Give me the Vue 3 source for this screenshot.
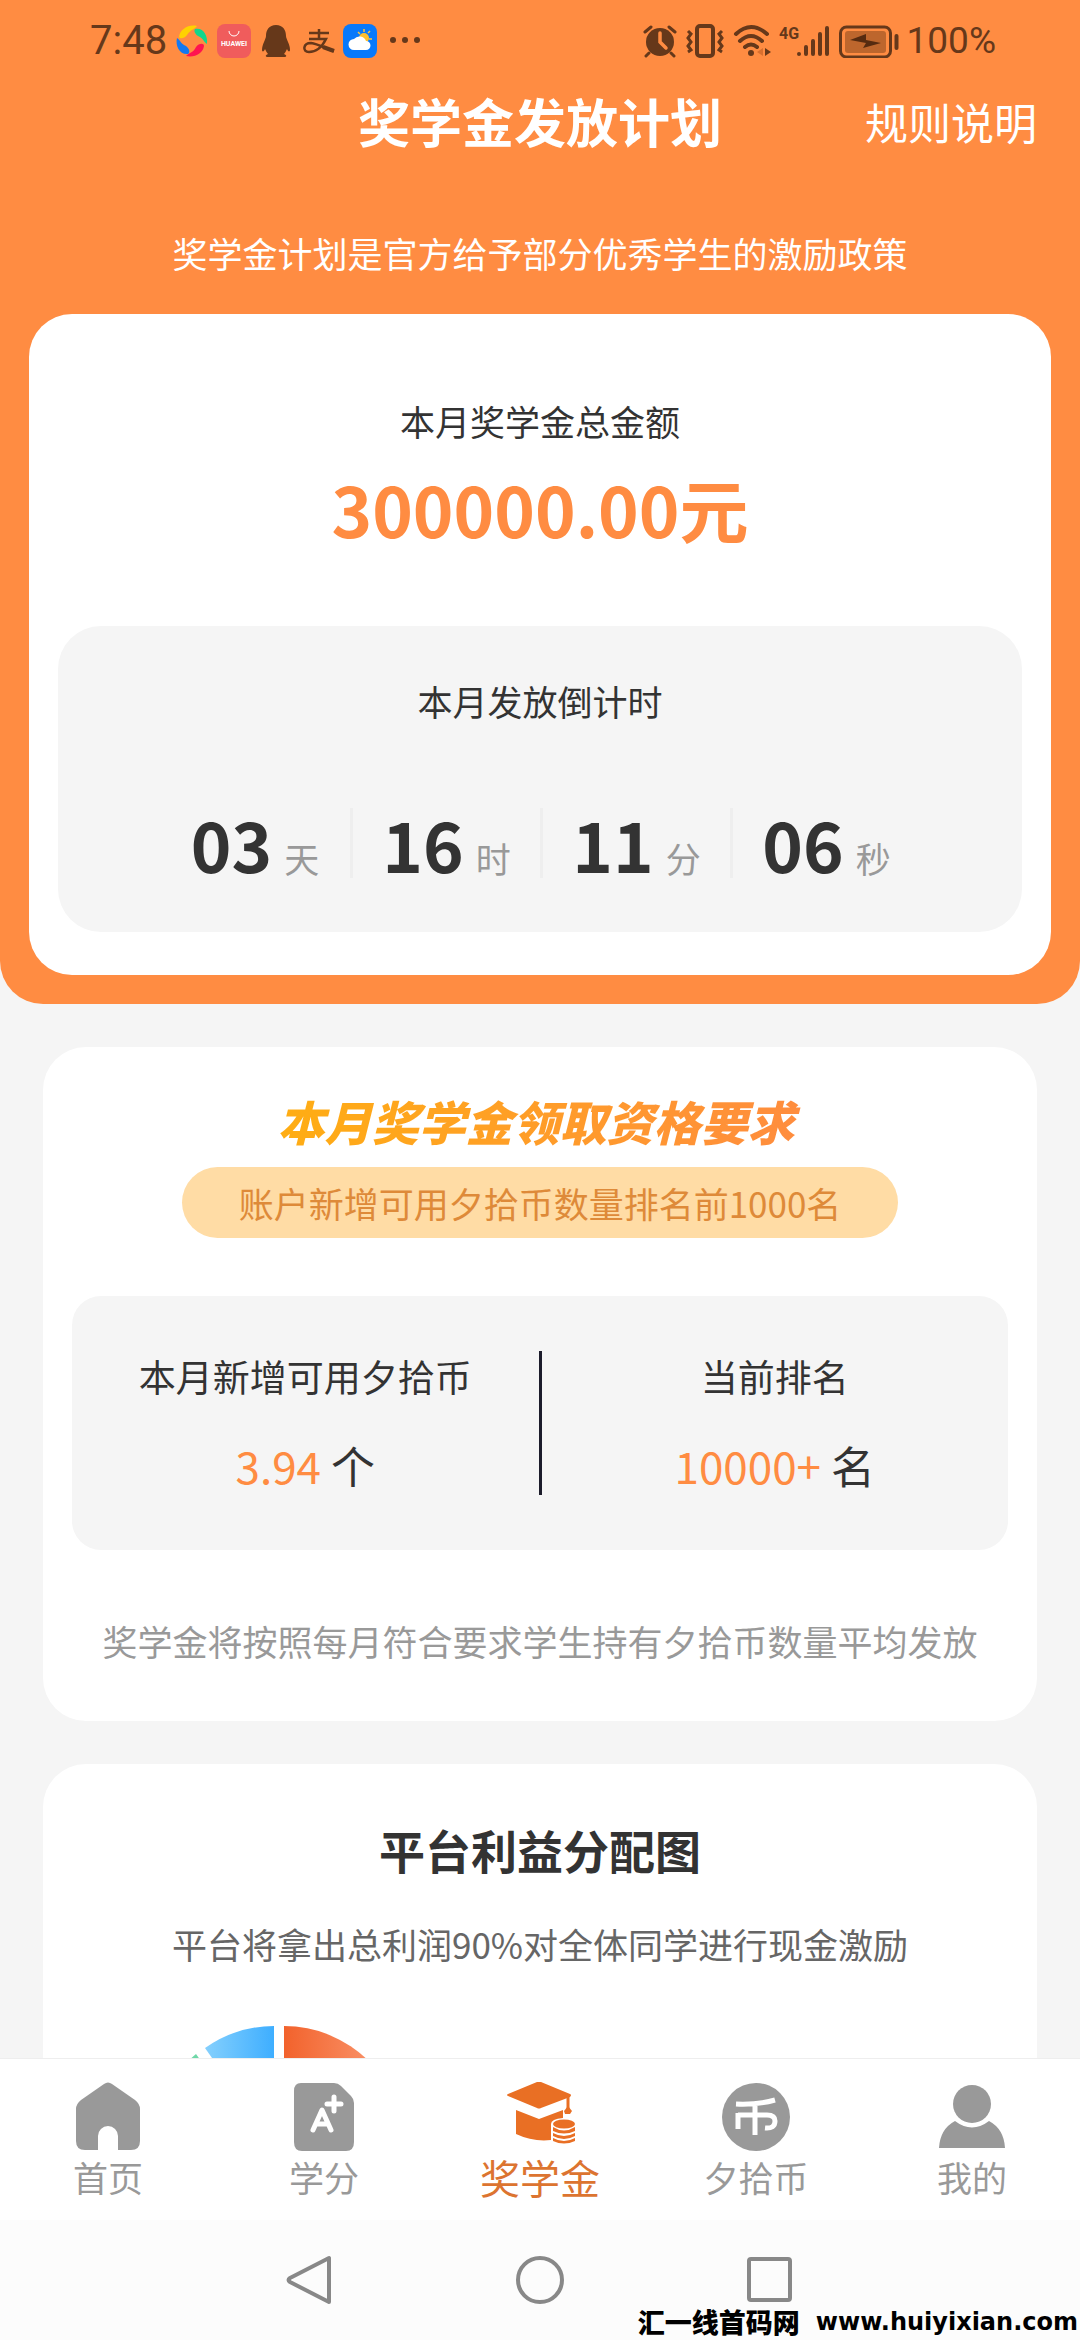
<script setup>
import { ref } from 'vue'

const countdown = [
  { value: '03', unit: '天' },
  { value: '16', unit: '时' },
  { value: '11', unit: '分' },
  { value: '06', unit: '秒' },
]

const stats = [
  { label: '本月新增可用夕拾币', value: '3.94', unit: '个' },
  { label: '当前排名', value: '10000+', unit: '名' },
]

const tabs = [
  { id: 'home', label: '首页' },
  { id: 'credit', label: '学分' },
  { id: 'scholarship', label: '奖学金' },
  { id: 'coin', label: '夕拾币' },
  { id: 'me', label: '我的' },
]
const active = ref('scholarship')
</script>

<template>
  <div class="app">
    <div class="status">
      <div class="status-left">
        <span class="clock">7:48</span>
        <svg width="34" height="34" viewBox="0 0 34 34">
          <path d="M4 13C5 5 14 0 22 2C19 6 16 5 12 11C9 15 5 15 4 13Z" fill="#ffd200" />
          <path d="M20 5C28 3 33 11 32 20C28 17 29 15 23 12C19 9 19 6 20 5Z" fill="#12d68b" />
          <path d="M29 22C28 29 20 34 11 32C15 28 18 29 21 23C24 19 29 19 29 22Z" fill="#ff1450" />
          <path d="M13 30C5 31 0 22 2 14C6 17 5 19 11 22C15 25 15 29 13 30Z" fill="#1478f0" />
        </svg>
        <svg width="34" height="34" viewBox="0 0 34 34">
          <rect width="34" height="34" rx="8" fill="#f05c5c" />
          <path d="M12 7a5 5 0 0 0 10 0" fill="none" stroke="#fff" stroke-width="1" />
          <text x="17" y="22" text-anchor="middle" class="brand">HUAWEI</text>
        </svg>
        <svg width="34" height="34" viewBox="0 0 34 34">
          <path d="M17 1C10 1 7 6 7 12C7 15 3 20 3 26C3 28 5 28 6 25C7 27 8 29 9 30C6 31 6 33 9 33H25C28 33 28 31 25 30C26 29 27 27 28 25C29 28 31 28 31 26C31 20 27 15 27 12C27 6 24 1 17 1Z" fill="#66381a" />
        </svg>
        <svg width="34" height="34" viewBox="0 0 34 34" fill="none" stroke="#66381a" stroke-width="2.5">
          <path d="M8 9H28M18 5V15M8 15H25C21 23 15 28 8 28C1 28 2 19 10 19C18 20 25 25 33 27" />
          <path d="M22 23L33 27" stroke-width="4" />
        </svg>
        <svg width="34" height="34" viewBox="0 0 34 34">
          <rect width="34" height="34" rx="8" fill="#0879fb" />
          <path d="M21 5V8M27 7L25 9M15 8L17 10M29 15H26" stroke="#ffc53d" stroke-width="1.5" />
          <circle cx="21" cy="14" r="5" fill="#ffc02e" />
          <path d="M11 26a5 5 0 0 1 0-11a7 7 0 0 1 12 2a4.5 4.5 0 0 1 0 9Z" fill="#fff" />
        </svg>
        <svg width="44" height="34" viewBox="0 0 44 34" fill="#66381a">
          <circle cx="8" cy="16" r="3" /><circle cx="20" cy="16" r="3" /><circle cx="32" cy="16" r="3" />
        </svg>
      </div>
      <div class="status-right">
        <svg width="34" height="34" viewBox="0 0 34 34">
          <circle cx="17" cy="18" r="14" fill="#66381a" />
          <path d="M2 8L8 3M32 8L26 3M6 29L3 32M28 29L31 32" stroke="#66381a" stroke-width="3" stroke-linecap="round" />
          <path d="M17 9V18L23 24" fill="none" stroke="#ff8c42" stroke-width="3.5" stroke-linecap="round" />
        </svg>
        <svg width="40" height="34" viewBox="0 0 40 34" fill="none" stroke="#66381a">
          <rect x="12" y="2" width="16" height="30" rx="3" stroke-width="4" />
          <path d="M3 7L6 10L3 14L6 18L3 22L6 26L3 28M37 7L34 10L37 14L34 18L37 22L34 26L37 28" stroke-width="3" />
        </svg>
        <svg width="38" height="34" viewBox="0 0 38 34" fill="none" stroke="#66381a" stroke-width="4" stroke-linecap="round">
          <path d="M3 10Q18 -4 34 10M7 17Q18 7 29 17M12 23Q18 18 24 23" />
          <circle cx="18" cy="29" r="3" fill="#66381a" stroke="none" />
          <path d="M32 24V32L38 28Z" fill="#66381a" stroke="none" />
          <path d="M30 24V32L24 28Z" fill="#d9702f" stroke="none" />
        </svg>
        <svg width="52" height="34" viewBox="0 0 52 34">
          <text x="0" y="15" class="network">4G</text>
          <path d="M20 30V30M27 23V30M34 17V30M41 10V30M48 4V30" stroke="#66381a" stroke-width="4" stroke-linecap="round" />
        </svg>
        <svg width="60" height="34" viewBox="0 0 60 34">
          <rect x="1.5" y="3" width="50" height="30" rx="6" fill="none" stroke="#66381a" stroke-width="3" />
          <rect x="6" y="7" width="41" height="22" rx="3" fill="#bd662d" />
          <path d="M11 16L27 19L24 24L42 19L27 16V10Z" fill="#562b10" />
          <path d="M57.5 12V24" stroke="#66381a" stroke-width="4" stroke-linecap="round" />
        </svg>
        <span class="percent">100%</span>
      </div>
    </div>

    <main class="content">
      <header class="hero">
        <div class="title-row">
          <h1>奖学金发放计划</h1>
          <a class="rules" href="#rules">规则说明</a>
        </div>
        <p class="intro">奖学金计划是官方给予部分优秀学生的激励政策</p>
        <section class="total">
          <p class="label">本月奖学金总金额</p>
          <p class="amount">300000.00元</p>
          <div class="timer">
            <p class="label">本月发放倒计时</p>
            <div class="cells">
              <div v-for="c in countdown" :key="c.unit" class="cell">
                <strong>{{ c.value }}</strong><span>{{ c.unit }}</span>
              </div>
            </div>
          </div>
        </section>
      </header>

      <section class="card qualify">
        <h2 class="fancy">本月奖学金领取资格要求</h2>
        <p class="pill">账户新增可用夕拾币数量排名前1000名</p>
        <div class="stats">
          <div v-for="s in stats" :key="s.label" class="stat">
            <p class="stat-label">{{ s.label }}</p>
            <p class="stat-value"><em>{{ s.value }}</em><span>{{ s.unit }}</span></p>
          </div>
        </div>
        <p class="note">奖学金将按照每月符合要求学生持有夕拾币数量平均发放</p>
      </section>

      <section class="card share">
        <h2>平台利益分配图</h2>
        <p class="share-sub">平台将拿出总利润90%对全体同学进行现金激励</p>
        <svg class="pie" width="250" height="240" viewBox="0 0 250 240">
          <defs>
            <linearGradient id="blue"><stop offset="0" stop-color="#85d0fd" /><stop offset="1" stop-color="#3eaeff" /></linearGradient>
            <linearGradient id="orange"><stop offset="0" stop-color="#f2622c" /><stop offset="1" stop-color="#fca27c" /></linearGradient>
          </defs>
          <path d="M120 120V0A120 120 0 0 0 51 22Z" fill="url(#blue)" />
          <path d="M130 120V0A120 120 0 0 1 130 240Z" fill="url(#orange)" />
          <path d="M112 126L42 28A120 120 0 0 0 120 240Z" fill="#6fd8a8" />
        </svg>
      </section>
    </main>

    <nav class="tabs">
      <a v-for="t in tabs" :key="t.id" :href="'#' + t.id" class="tab" :class="{ active: active === t.id }" @click="active = t.id">
        <svg v-if="t.id === 'home'" width="70" height="70" viewBox="0 0 70 70">
          <path d="M31 2Q35 -1 39 2L62 18Q67 22 67 27V59Q67 68 58 68H45V54A10 10 0 0 0 25 54V68H12Q3 68 3 59V27Q3 22 8 18Z" fill="currentColor" />
        </svg>
        <svg v-else-if="t.id === 'credit'" width="70" height="70" viewBox="0 0 70 70">
          <path d="M12 1H45Q49 1 52 4L62 14Q65 17 65 21V60Q65 69 57 69H13Q5 69 5 60V9Q5 1 12 1Z" fill="currentColor" />
          <path d="M24 48L33 28L42 48M28 42H38M45 15V29M38 22H52" fill="none" stroke="#fff" stroke-width="5" stroke-linecap="round" stroke-linejoin="round" />
        </svg>
        <svg v-else-if="t.id === 'scholarship'" width="70" height="70" viewBox="0 0 70 70">
          <path d="M32 0Q34 -1 36 0L65 12Q67 13 65 15L36 26Q34 27 32 26L3 14Q1 13 3 12Z" fill="#e96f24" />
          <path d="M63 14V27" stroke="#e96f24" stroke-width="3" />
          <path d="M63 24L67 29L65 32H60L59 29Z" fill="#e96f24" />
          <path d="M11 28L34 37L58 28V36Q46 37 46 42V58Q28 60 11 52Z" fill="#e96f24" />
          <ellipse cx="59" cy="42" rx="11" ry="4.5" fill="#e96f24" />
          <path d="M48 45Q59 52 70 45V49Q59 54 48 49ZM48 51Q59 57 70 51V54Q59 60 48 54ZM48 56Q59 62 70 56V59Q59 64 48 59Z" fill="#e96f24" />
        </svg>
        <svg v-else-if="t.id === 'coin'" width="70" height="70" viewBox="0 0 70 70">
          <circle cx="35" cy="35" r="34" fill="currentColor" />
          <path d="M15 22Q36 23 54 18M34 22V53M17 47V31M17 33H46Q54 33 54 39Q54 47 44 46" fill="none" stroke="#fff" stroke-width="5" />
        </svg>
        <svg v-else width="70" height="70" viewBox="0 0 70 70">
          <circle cx="35" cy="22" r="19" fill="currentColor" />
          <path d="M2 66Q3 47 18 39Q35 52 52 39Q67 47 68 66Z" fill="currentColor" />
        </svg>
        <span>{{ t.label }}</span>
      </a>
    </nav>

    <div class="system">
      <button type="button" aria-label="返回">
        <svg width="50" height="54" viewBox="0 0 50 54"><path d="M44 5V49L5 29Q2 27 5 25Z" fill="none" stroke="#888" stroke-width="4" stroke-linejoin="round" /></svg>
      </button>
      <button type="button" aria-label="主屏幕">
        <svg width="50" height="54" viewBox="0 0 50 54"><circle cx="25" cy="27" r="22" fill="none" stroke="#888" stroke-width="4" /></svg>
      </button>
      <button type="button" aria-label="最近任务">
        <svg width="50" height="54" viewBox="0 0 50 54"><rect x="4" y="6" width="41" height="41" rx="2" fill="none" stroke="#888" stroke-width="4" /></svg>
      </button>
      <p class="site"><span>汇一线首码网</span><b>www.huiyixian.com</b></p>
    </div>
  </div>
</template>

<style>
body {
  margin: 0;
  background: #f5f5f5;
}
</style>

<style scoped>
.app {
  display: flex;
  flex-direction: column;
  height: 100vh;
  background: #f5f5f5;
  color: #333;
  font-family: "Noto Sans CJK SC", sans-serif;
  font-size: 35px;
  line-height: 50px;
}
h1, h2, p {
  margin: 0;
}
a {
  color: inherit;
  text-decoration: none;
}
svg {
  display: block;
  flex: none;
}

.status {
  display: flex;
  justify-content: space-between;
  align-items: center;
  height: 82px;
  padding: 0 84px 0 90px;
  background: #ff8c42;
  color: #66381a;
  font-family: Roboto, sans-serif;
}
.status-left,
.status-right {
  display: flex;
  align-items: center;
  gap: 8px;
}
.clock {
  font-size: 40px;
}
.percent {
  font-size: 37px;
}
.brand {
  font: bold 7px Roboto, sans-serif;
  fill: #fff;
}
.network {
  font: bold 16px Roboto, sans-serif;
  fill: #66381a;
}

.content {
  flex: 1;
  min-height: 0;
  overflow-y: auto;
  scrollbar-width: none;
}
.hero {
  padding: 0 29px 29px;
  border-radius: 0 0 43px 43px;
  background: #ff8c42;
  color: #fff;
  text-align: center;
}
.title-row {
  display: grid;
  grid-template-columns: 1fr auto 1fr;
  align-items: center;
  height: 78px;
  padding: 0 14px;
}
h1 {
  grid-column: 2;
  font-size: 52px;
  line-height: 78px;
}
.rules {
  justify-self: end;
  font-size: 43px;
}
.intro {
  padding: 68px 0 36px;
}
.total {
  padding: 82px 29px 43px;
  border-radius: 43px;
  background: #fff;
  color: #333;
}
.amount {
  margin: 12px 0 68px;
  color: #ff8c42;
  font-size: 69px;
  font-weight: 700;
  line-height: 100px;
}
.timer {
  padding: 50px 0 54px;
  border-radius: 43px;
  background: #f5f5f5;
}
.cells {
  display: flex;
  justify-content: center;
  margin-top: 82px;
}
.cell {
  display: flex;
  justify-content: center;
  align-items: baseline;
  gap: 12px;
  box-sizing: border-box;
  width: 190px;
  height: 70px;
  line-height: 70px;
}
.cell + .cell {
  border-left: 3px solid #eee;
}
.cell strong {
  font-size: 69px;
}
.cell span {
  color: #999;
}

.card {
  margin: 43px 43px 0;
  border-radius: 43px;
  background: #fff;
  text-align: center;
}
.qualify {
  padding: 44px 29px 55px;
}
.fancy {
  width: fit-content;
  margin: 0 auto 16px;
  padding: 0 12px 0 4px;
  background: linear-gradient(100deg, #ffae12, #ff8c3f);
  background-clip: text;
  color: transparent;
  font-size: 47px;
  font-style: italic;
  font-weight: 900;
  line-height: 60px;
}
.pill {
  width: fit-content;
  margin: 0 auto 58px;
  padding: 0 57px;
  border-radius: 36px;
  background: #ffdca5;
  color: #de8a39;
  line-height: 71px;
}
.stats {
  display: flex;
  padding: 55px 0;
  border-radius: 29px;
  background: #f5f5f5;
}
.stat {
  flex: 1;
}
.stat + .stat {
  border-left: 3px solid #1c1c2b;
}
.stat-label {
  margin-bottom: 34px;
  font-size: 37px;
}
.stat-value {
  display: flex;
  justify-content: center;
  gap: 10px;
  font-size: 44px;
  line-height: 60px;
}
.stat-value em {
  color: #ff8c42;
  font-style: normal;
}
.note {
  margin-top: 66px;
  color: #999;
}
.share {
  padding: 53px 29px 60px;
}
.share h2 {
  font-size: 46px;
  line-height: 64px;
}
.share-sub {
  margin: 38px 0 57px;
  color: #666;
}
.pie {
  margin-left: 82px;
}

.tabs {
  display: flex;
  border-top: 1px solid #eee;
  background: #fff;
  color: #999;
}
.tab {
  display: flex;
  flex: 1;
  flex-direction: column;
  align-items: center;
  padding: 23px 0 18px;
}
.tab.active {
  color: #dc7430;
  font-size: 40px;
}

.system {
  position: relative;
  display: flex;
  justify-content: center;
  align-items: center;
  gap: 180px;
  height: 120px;
  background: #fcfcfc;
}
.system button {
  padding: 0;
  border: 0;
  background: none;
}
.site {
  position: absolute;
  right: 2px;
  bottom: 0;
  display: flex;
  gap: 16px;
  color: #000;
  font-size: 27px;
  font-weight: 900;
  line-height: 36px;
}
.site b {
  font-family: "DejaVu Sans", sans-serif;
  font-size: 24px;
}
</style>
